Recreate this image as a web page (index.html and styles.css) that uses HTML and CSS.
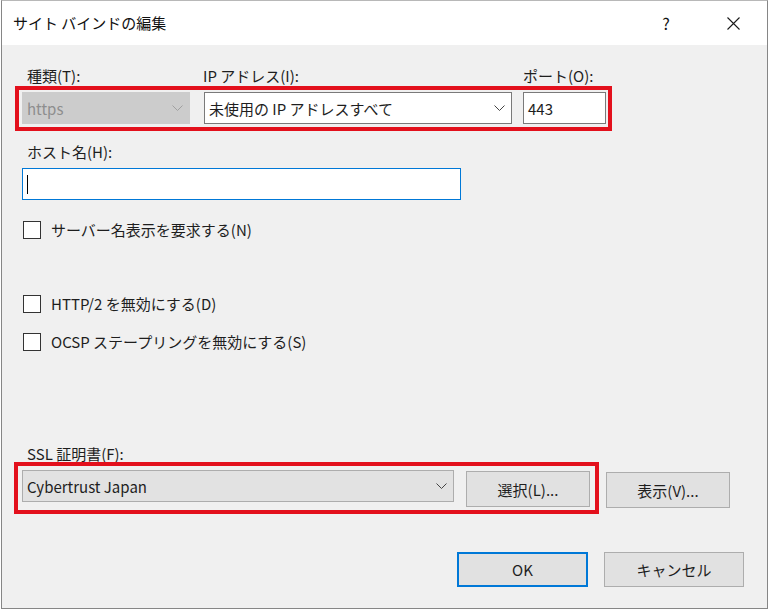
FILE: index.html
```html
<!DOCTYPE html>
<html lang="ja">
<head>
<meta charset="utf-8">
<title>サイト バインドの編集</title>
<link rel="stylesheet" href="styles.css">
</head>
<body>
<div class="dialog">
  <div class="titlebar">
    <span class="title">サイト バインドの編集</span>
    <span class="help">?</span>
    <span class="close">
      <svg width="13" height="13" viewBox="0 0 13 13"><path d="M0.5 0.5 L12.5 12.5 M12.5 0.5 L0.5 12.5" stroke="#1a1a1a" stroke-width="1.1"/></svg>
    </span>
  </div>

  <div class="content">
    <div class="label-row">
      <span class="lbl lbl-type">種類(T):</span>
      <span class="lbl lbl-ip">IP アドレス(I):</span>
      <span class="lbl">ポート(O):</span>
    </div>
    <div class="mark binding">
      <div class="combo disabled w-type">
        <span>https</span>
        <svg class="chev" width="11" height="6" viewBox="0 0 11 6"><path d="M0.5 0.5 L5.5 5.5 L10.5 0.5" fill="none" stroke="#a0a0a0"/></svg>
      </div>
      <div class="combo w-ip">
        <span>未使用の IP アドレスすべて</span>
        <svg class="chev" width="11" height="6" viewBox="0 0 11 6"><path d="M0.5 0.5 L5.5 5.5 L10.5 0.5" fill="none" stroke="#444"/></svg>
      </div>
      <div class="textbox w-port">443</div>
    </div>

    <span class="lbl lbl-host">ホスト名(H):</span>
    <div class="textbox focused host"><span class="caret"></span></div>

    <div class="check check-sni"><span class="box"></span>サーバー名表示を要求する(N)</div>
    <div class="check check-http2"><span class="box"></span>HTTP/2 を無効にする(D)</div>
    <div class="check check-ocsp"><span class="box"></span>OCSP ステープリングを無効にする(S)</div>

    <span class="lbl lbl-ssl">SSL 証明書(F):</span>
    <div class="ssl-row">
      <div class="mark cert">
        <div class="combo flat w-cert">
          <span>Cybertrust Japan</span>
          <svg class="chev" width="11" height="6" viewBox="0 0 11 6"><path d="M0.5 0.5 L5.5 5.5 L10.5 0.5" fill="none" stroke="#444"/></svg>
        </div>
        <button class="btn btn-pick">選択(L)...</button>
      </div>
      <button class="btn btn-view">表示(V)...</button>
    </div>

    <div class="footer">
      <button class="btn btn-ok">OK</button>
      <button class="btn btn-cancel">キャンセル</button>
    </div>
  </div>
</div>
</body>
</html>
```

FILE: styles.css
```css
* {
  box-sizing: border-box;
}

body {
  margin: 0;
  background: #ffffff;
  font-family: "Noto Sans CJK JP", "Noto Sans", sans-serif;
  font-size: 15px;
  color: #1e1e1e;
}

.dialog {
  margin-left: 1px;
  width: 767px;
  height: 609px;
  border: 1px solid #868686;
  border-top-color: #b8b8b8;
  background: #f0f0f0;
  display: flex;
  flex-direction: column;
}

/* title bar */
.titlebar {
  height: 44px;
  background: #ffffff;
  display: flex;
  align-items: center;
  padding: 0 11px 0 11px;
}

.title {
  font-size: 15px;
  color: #111;
  line-height: 20px;
}

.help {
  margin-left: auto;
  width: 46px;
  margin-right: 21px;
  text-align: center;
  font-size: 16px;
  color: #111;
}

.close {
  width: 46px;
  height: 30px;
  display: flex;
  align-items: center;
  justify-content: center;
}

/* body */
.content {
  padding: 21px 0 0 20px;
  display: flex;
  flex-direction: column;
  align-items: flex-start;
}

.lbl {
  display: block;
  line-height: 20px;
}

.label-row {
  display: flex;
}

.lbl-type {
  width: 181px;
  padding-left: 5px;
}

.lbl-ip {
  width: 320px;
}

.lbl-host {
  margin-top: 11px;
  padding-left: 5px;
}

.lbl-ssl {
  margin-top: 94px;
  padding-left: 5px;
  line-height: 16px;
}

/* red markers around the edited fields */
.mark {
  border: 4px solid #e3101c;
  display: flex;
}

.binding {
  margin-left: -7px;
  width: 597px;
  padding: 2px 2px 3px 3px;
}

.cert {
  margin-left: -8px;
  width: 585px;
  padding: 4px 5px 3px 4px;
  align-items: flex-start;
}

/* inputs */
.combo,
.textbox {
  height: 32px;
  border: 1px solid #7a7a7a;
  background: #ffffff;
  display: flex;
  align-items: center;
  padding: 0 6px 0 4px;
}

.combo {
  justify-content: space-between;
}

.combo.disabled {
  background: #cccccc;
  border-color: #cccccc;
  color: #8e8e8e;
}

.combo.flat {
  background: #e2e2e2;
  border-color: #adadad;
}

.w-type {
  width: 168px;
}

.w-ip {
  width: 308px;
  margin-left: 14px;
}

.w-port {
  width: 83px;
  margin-left: 11px;
}

.w-cert {
  width: 432px;
}

.host {
  margin-top: 6px;
  width: 439px;
  border-color: #0078d7;
}

.caret {
  width: 1px;
  height: 19px;
  background: #000;
}

/* checkboxes */
.check {
  display: flex;
  align-items: center;
  height: 20px;
  line-height: 20px;
  margin-left: 1px;
}

.check .box {
  width: 18px;
  height: 18px;
  border: 1px solid #333333;
  background: #ffffff;
  margin-right: 10px;
}

.check-sni {
  margin-top: 20px;
}

.check-http2 {
  margin-top: 54px;
}

.check-ocsp {
  margin-top: 18px;
}

/* buttons */
.ssl-row {
  display: flex;
  align-items: flex-start;
}

.btn {
  font-family: inherit;
  font-size: 15px;
  color: #1e1e1e;
  background: #e1e1e1;
  border: 1px solid #adadad;
  padding: 0;
  height: 36px;
  width: 124px;
}

.btn-pick {
  margin: 1px 0 0 12px;
}

.btn-view {
  margin: 10px 0 0 7px;
}

.footer {
  margin-top: 38px;
  align-self: stretch;
  display: flex;
  justify-content: flex-end;
  gap: 16px;
  padding-right: 23px;
}

.btn-ok {
  width: 131px;
  height: 35px;
  border: 2px solid #0078d7;
}

.btn-cancel {
  width: 140px;
  height: 35px;
}
```
